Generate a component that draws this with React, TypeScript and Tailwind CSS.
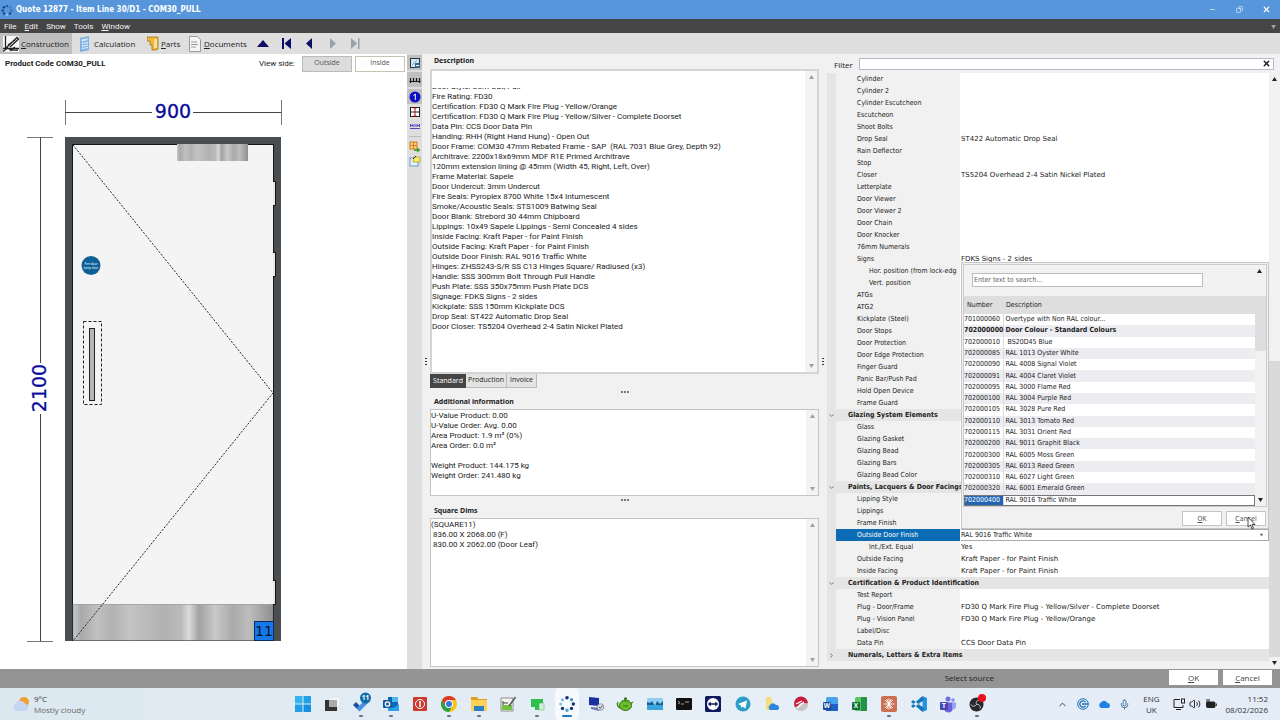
import React from "react"
import { ChevronUp, Mic, Minus, Copy, X, Volume2, ChevronDown, ChevronRight } from "lucide-react"

type Row = { label: string; value?: string; kind?: "group" | "closed" | "sub" | "selected" }

const properties: Row[] = [
	{ label: "Cylinder" },
	{ label: "Cylinder 2" },
	{ label: "Cylinder Escutcheon" },
	{ label: "Escutcheon" },
	{ label: "Shoot Bolts" },
	{ label: "Drop Seal", value: "ST422 Automatic Drop Seal" },
	{ label: "Rain Deflector" },
	{ label: "Stop" },
	{ label: "Closer", value: "TS5204 Overhead 2-4 Satin Nickel Plated" },
	{ label: "Letterplate" },
	{ label: "Door Viewer" },
	{ label: "Door Viewer 2" },
	{ label: "Door Chain" },
	{ label: "Door Knocker" },
	{ label: "76mm Numerals" },
	{ label: "Signs", value: "FDKS Signs - 2 sides" },
	{ label: "Hor. position (from lock-edg", kind: "sub" },
	{ label: "Vert. position", kind: "sub" },
	{ label: "ATGs" },
	{ label: "ATG2" },
	{ label: "Kickplate (Steel)" },
	{ label: "Door Stops" },
	{ label: "Door Protection" },
	{ label: "Door Edge Protection" },
	{ label: "Finger Guard" },
	{ label: "Panic Bar/Push Pad" },
	{ label: "Hold Open Device" },
	{ label: "Frame Guard" },
	{ label: "Glazing System Elements", kind: "group" },
	{ label: "Glass" },
	{ label: "Glazing Gasket" },
	{ label: "Glazing Bead" },
	{ label: "Glazing Bars" },
	{ label: "Glazing Bead Color" },
	{ label: "Paints, Lacquers & Door Facings", kind: "group" },
	{ label: "Lipping Style" },
	{ label: "Lippings" },
	{ label: "Frame Finish" },
	{ label: "Outside Door Finish", value: "RAL 9016 Traffic White", kind: "selected" },
	{ label: "Int./Ext. Equal", value: "Yes", kind: "sub" },
	{ label: "Outside Facing", value: "Kraft Paper - for Paint Finish" },
	{ label: "Inside Facing", value: "Kraft Paper - for Paint Finish" },
	{ label: "Certification & Product Identification", kind: "group" },
	{ label: "Test Report" },
	{ label: "Plug - Door/Frame", value: "FD30 Q Mark Fire Plug - Yellow/Silver - Complete Doorset" },
	{ label: "Plug - Vision Panel", value: "FD30 Q Mark Fire Plug - Yellow/Orange" },
	{ label: "Label/Disc" },
	{ label: "Data Pin", value: "CCS Door Data Pin" },
	{ label: "Numerals, Letters & Extra Items", kind: "closed" },
]

const colours: [string, string][] = [
	["701000060", "Overtype with Non RAL colour..."],
	["702000000", "Door Colour - Standard Colours"],
	["702000010", " BS20D45 Blue"],
	["702000085", "RAL 1013 Oyster White"],
	["702000090", "RAL 4008 Signal Violet"],
	["702000091", "RAL 4004 Claret Violet"],
	["702000095", "RAL 3000 Flame Red"],
	["702000100", "RAL 3004 Purple Red"],
	["702000105", "RAL 3028 Pure Red"],
	["702000110", "RAL 3013 Tomato Red"],
	["702000115", "RAL 3031 Orient Red"],
	["702000200", "RAL 9011 Graphit Black"],
	["702000300", "RAL 6005 Moss Green"],
	["702000305", "RAL 6013 Reed Green"],
	["702000310", "RAL 6027 Light Green"],
	["702000320", "RAL 6001 Emerald Green"],
	["702000400", "RAL 9016 Traffic White"],
]

const description = [
	"Fire Rating: FD30",
	"Certification: FD30 Q Mark Fire Plug - Yellow/Orange",
	"Certification: FD30 Q Mark Fire Plug - Yellow/Silver - Complete Doorset",
	"Data Pin: CCS Door Data Pin",
	"Handing: RHH (Right Hand Hung) - Open Out",
	"Door Frame: COM30 47mm Rebated Frame - SAP  (RAL 7031 Blue Grey, Depth 92)",
	"Architrave: 2200x18x69mm MDF R1E Primed Architrave",
	"120mm extension lining @ 45mm (Width 45, Right, Left, Over)",
	"Frame Material: Sapele",
	"Door Undercut: 3mm Undercut",
	"Fire Seals: Pyroplex 8700 White 15x4 Intumescent",
	"Smoke/Acoustic Seals: STS1009 Batwing Seal",
	"Door Blank: Strebord 30 44mm Chipboard",
	"Lippings: 10x49 Sapele Lippings - Semi Concealed 4 sides",
	"Inside Facing: Kraft Paper - for Paint Finish",
	"Outside Facing: Kraft Paper - for Paint Finish",
	"Outside Door Finish: RAL 9016 Traffic White",
	"Hinges: ZHSS243-S/R SS C13 Hinges Square/ Radiused (x3)",
	"Handle: SSS 300mm Bolt Through Pull Handle",
	"Push Plate: SSS 350x75mm Push Plate DCS",
	"Signage: FDKS Signs - 2 sides",
	"Kickplate: SSS 150mm Kickplate DCS",
	"Drop Seal: ST422 Automatic Drop Seal",
	"Door Closer: TS5204 Overhead 2-4 Satin Nickel Plated",
]

const Triangle: React.FC<{ down?: boolean; className?: string }> = ({ down, className }) => (
	<svg viewBox="0 0 5 4" className={`h-1 w-[5px] ${className ?? "text-gray-400"}`} fill="currentColor">
		<path d={down ? "M0 0h5L2.500 4z" : "M0 4h5L2.500 0z"} />
	</svg>
)

const ScrollStrip = () => (
	<div className="flex w-3 shrink-0 flex-col items-center justify-between bg-[#f3f3f3] py-1">
		<Triangle />
		<Triangle down />
	</div>
)

const Hot: React.FC<{ text: string }> = ({ text }) => (
	<>
		<span className="underline">{text[0]}</span>
		{text.slice(1)}
	</>
)

const TitleBar = () => (
	<header className="flex h-[19px] items-center bg-[#5796db] text-white">
		<svg viewBox="0 0 14 14" className="h-3.5 w-3.5">
			{[
				[7, 3, "#1c5fae"],
				[10, 4.3, "#3b7fca"],
				[11.3, 7.5, "#2a6ab8"],
				[10, 10.5, "#173f86"],
				[7, 11.8, "#8fc0f0"],
				[4, 10.5, "#173f86"],
				[2.7, 7.5, "#173f86"],
				[4, 4.3, "#173f86"],
			].map(([x, y, c]) => (
				<circle key={`${x}-${y}`} cx={x} cy={y} r="1.2" fill={c as string} />
			))}
		</svg>
		<h1 className="flex-1 pl-0.5 font-[DejaVu_Sans_Condensed,sans-serif] text-[8px] font-bold">Quote 12877 - Item Line 30/D1 - COM30_PULL</h1>
		<button aria-label="Minimise" className="flex w-[27px] justify-center">
			<Minus size={7} />
		</button>
		<button aria-label="Restore" className="flex w-[27px] justify-center">
			<Copy size={7} className="-scale-x-100" />
		</button>
		<button aria-label="Close" className="flex w-[27px] justify-center">
			<X size={9} strokeWidth={3} />
		</button>
	</header>
)

const MenuBar = () => (
	<nav className="flex h-3.5 items-center gap-2 bg-[#454545] px-1 pt-px font-[Roboto,sans-serif] text-[8px] text-gray-100">
		{["File", "Edit", "Show", "Tools", "Window"].map((item) => (
			<button key={item}>{item === "Edit" || item === "Window" ? <Hot text={item} /> : item}</button>
		))}
		<Triangle down className="ml-auto text-gray-400" />
	</nav>
)

const ToolBar = () => (
	<div className="flex h-[21px] items-stretch bg-[#dedede] text-[8px] text-[#222]">
		<button className="flex w-18 items-center gap-0.5 bg-[#bfbfbf] pl-[3px]">
			<svg viewBox="0 0 16 16" className="h-4 w-4">
				<rect width="16" height="16" fill="#f8f8f8" />
				<path d="M2.500 0v13M0 12.500h16M3 12L14 1.500l1.500 1.500L7 11M5 9l7-5" stroke="#222" fill="none" strokeWidth="1.300" />
				<path d="M0 15.500l5-4M7 15l5-4M6 13c3 2 5 1 9 1" stroke="#222" fill="none" strokeWidth="1.300" />
			</svg>
			<span>
				<Hot text="Construction" />
			</span>
		</button>
		<button className="flex w-[73px] items-center gap-1 pl-1.5">
			<svg viewBox="0 0 12 16" className="h-4 w-3">
				<path d="M2 2l9-2v14l-9 2z" fill="#7fb0e6" />
				<path d="M3.500 3.500l6-1.200v2l-6 1.200z" fill="#dceafc" />
				<path d="M4 7.500l6-1M4 10l6-1M4 12.500l6-1" stroke="#fff" strokeWidth="1.400" strokeDasharray="1.400 .8" />
			</svg>
			Calculation
		</button>
		<button className="flex w-[38px] items-center gap-0.5 pl-0.5">
			<svg viewBox="0 0 12 15" className="h-[15px] w-3">
				<path d="M0 1h11v12l-2 1H5V9H3V5H0z" fill="#f2b632" stroke="#9c7424" strokeWidth=".8" />
				<path d="M7 3h3v9H7z" fill="#fbe09a" />
			</svg>
			<span>
				<Hot text="Parts" />
			</span>
		</button>
		<button className="flex items-center gap-[3px] pl-1.5">
			<svg viewBox="0 0 12 16" className="h-4 w-3">
				<path d="M.5.5h8l3 3v12H.5z" fill="#f6f6f6" stroke="#999" />
				<path d="M2 6h6M2 8.500h7M2 11h5" stroke="#999" strokeWidth="1.200" />
			</svg>
			<span>
				<Hot text="Documents" />
			</span>
		</button>
		<div className="flex items-center gap-3 pl-2.5 text-[#0c0c66]">
			<button aria-label="Up">
				<svg viewBox="0 0 12 7" className="h-[7px] w-3" fill="currentColor">
					<path d="M6 0l6 7H0z" />
				</svg>
			</button>
			<button aria-label="First">
				<svg viewBox="0 0 11 11" className="h-[11px] w-[11px]" fill="currentColor">
					<path d="M1 0h2v11H1zM10 0v11L3.500 5.500z" />
				</svg>
			</button>
			<button aria-label="Previous">
				<svg viewBox="0 0 11 11" className="h-[11px] w-[11px]" fill="currentColor">
					<path d="M8 0v11L2 5.500z" />
				</svg>
			</button>
			<button aria-label="Next" className="text-gray-400">
				<svg viewBox="0 0 11 11" className="h-[11px] w-[11px]" fill="currentColor">
					<path d="M3 0v11l6-5.500z" />
				</svg>
			</button>
			<button aria-label="Last" className="text-gray-400">
				<svg viewBox="0 0 11 11" className="h-[11px] w-[11px]" fill="currentColor">
					<path d="M1 0v11l6-5.500zM8 0h1.500v11H8z" />
				</svg>
			</button>
		</div>
	</div>
)

const DoorDrawing = () => (
	<svg viewBox="0 72 407 597" className="min-h-0 w-full flex-1" preserveAspectRatio="xMinYMin meet">
		<defs>
			<linearGradient id="steel">
				<stop offset="0" stopColor="#c9c9c9" />
				<stop offset=".04" stopColor="#a9a9a9" />
				<stop offset=".12" stopColor="#c0c0c0" />
				<stop offset=".2" stopColor="#b2b2b2" />
				<stop offset=".28" stopColor="#c4c4c4" />
				<stop offset=".45" stopColor="#b2b2b2" />
				<stop offset=".54" stopColor="#bababa" />
				<stop offset=".58" stopColor="#dadada" />
				<stop offset=".63" stopColor="#a2a2a2" />
				<stop offset=".71" stopColor="#c9c9c9" />
				<stop offset=".8" stopColor="#a9a9a9" />
				<stop offset=".88" stopColor="#bdbdbd" />
				<stop offset="1" stopColor="#8f8f8f" />
			</linearGradient>
		</defs>
		<g stroke="#444" fill="none">
			<path d="M65.500 100v25M281.500 100v25M27 137.500h26M27 641.500h26" stroke="#777" />
			<path d="M65 112.500h87M193 112.500h88M40.500 137v226M40.500 414v227" />
		</g>
		<g fontFamily="DejaVu Sans, sans-serif" fontSize="19" fill="#0a0a9a" stroke="#0a0a9a" strokeWidth=".3" textAnchor="middle">
			<text x="173" y="118">
				900
			</text>
			<text transform="translate(46 388) rotate(-90)">2100</text>
		</g>
		<rect x="65" y="137" width="216" height="504" fill="#4a4e50" />
		<rect x="72.500" y="144.500" width="201" height="496" fill="#f4f4f4" stroke="#15151c" />
		<rect x="177" y="144" width="71" height="17" fill="url(#steel)" />
		<rect x="73" y="604.500" width="200" height="36" fill="url(#steel)" stroke="#777" strokeWidth=".5" />
		<g fill="#e8e8e8" stroke="#111">
			<path d="M273 181.500h2.500v24H273M273 252.500h2.500v24H273M273 580.500h2.500v24H273" />
		</g>
		<path d="M73 145L273 393L73 641" fill="none" stroke="#222" strokeDasharray="2 1.500" />
		<circle cx="91" cy="265.500" r="9.500" fill="#0e5f96" />
		<g fontFamily="Open Sans, sans-serif" fontSize="3" fontWeight="600" fill="#d8ecf8" textAnchor="middle">
			<text x="91" y="265">
				Fire door
			</text>
			<text x="91" y="269">
				keep shut
			</text>
		</g>
		<rect x="83.500" y="321.500" width="18" height="83" fill="none" stroke="#222" strokeDasharray="3 2" />
		<rect x="89.500" y="328.500" width="5" height="72" fill="#b5b5b5" stroke="#222" />
		<rect x="254.500" y="621.500" width="19" height="19" fill="#1478ea" stroke="#0a2a66" />
		<text x="264" y="636" fontFamily="DejaVu Sans, sans-serif" fontSize="14" textAnchor="middle" fill="#0a1430">
			11
		</text>
	</svg>
)

const DrawingPanel = () => (
	<section className="flex min-w-0 flex-col bg-white">
		<div className="flex h-[18px] items-center gap-[3px] pt-px pr-0.5 pl-[5px] font-[Roboto,sans-serif] text-[8px] text-[#222]">
			<h2 className="font-bold">Product Code COM30_PULL</h2>
			<span className="ml-auto pr-1">View side:</span>
			<button className="h-4 w-[50px] border border-[#bbb] bg-[#dcdcdc] font-['Open_Sans',sans-serif] text-[7px] text-[#555]">Outside</button>
			<button className="h-4 w-[50px] border border-[#c4c4b4] bg-white font-['Open_Sans',sans-serif] text-[7px] text-[#555]">Inside</button>
		</div>
		<DoorDrawing />
	</section>
)

const sideTools = [
	{
		label: "Glass view",
		on: true,
		art: (
			<>
				<rect x="1.500" y="1.500" width="9" height="9" fill="#cfe8f2" stroke="#234" />
				<path d="M3 8l5-5" stroke="#7ab" />
				<rect x="6" y="6" width="5" height="5" fill="#3d6486" />
				<path d="M7 8.500h3" stroke="#fff" />
			</>
		),
	},
	{
		label: "Dimensions",
		on: true,
		art: <path d="M1.500 4v5M.5 7.500h11M10.500 4v5M4.500 4v3M7.500 4v3" stroke="#112" fill="none" strokeWidth="1.200" />,
	},
	{
		label: "Numbers",
		on: true,
		art: (
			<>
				<circle cx="6" cy="6" r="5.500" fill="#0b10c4" />
				<path d="M4.500 4.500L6.300 3v6" stroke="#fff" fill="none" />
			</>
		),
	},
	{
		label: "Grid",
		art: (
			<>
				<rect x="1.500" y="1.500" width="9" height="9" fill="#fff" stroke="#222" />
				<path d="M1 6h10" stroke="#222" />
				<path d="M6 2v8M4.500 2h3M4.500 10h3" stroke="#b01820" />
			</>
		),
	},
	{ label: "Measure", art: <path d="M1 8.500h10M1.500 4v3M4 4v3M1.500 5.500H4M6 4v3M8 4v3M10.500 4v3M8 5.500h2" stroke="#5248b8" fill="none" /> },
	{
		label: "Export",
		divided: true,
		art: (
			<>
				<rect x="1" y="1" width="7" height="7" fill="#fbd27a" stroke="#d9791c" />
				<path d="M1 4.500h7M4.500 1v7" stroke="#d9791c" />
				<path d="M5 8.500h3V6.500l3.500 2.500L8 11.500V10H5z" fill="#3d9b2c" />
			</>
		),
	},
	{
		label: "Layers",
		art: (
			<>
				<rect x="1" y="3" width="8" height="8" fill="#e9f2fa" stroke="#6d9cc4" />
				<path d="M5 2h6v5H4z" fill="#f5ee62" stroke="#a39b2a" strokeWidth=".7" />
				<path d="M4 4l3-3" stroke="#333" />
			</>
		),
	},
]

const SideTools = () => (
	<div className="flex flex-col items-center gap-0.5 bg-[#dedede] pt-px">
		{sideTools.map((tool) => (
			<React.Fragment key={tool.label}>
				{tool.divided && <hr className="my-0.5 w-3 border-[#bbb]" />}
				<button aria-label={tool.label} className={`flex w-[15px] items-center justify-center ${tool.on ? "h-[15px] bg-[#c0c0c0]" : "h-3"}`}>
					<svg viewBox="0 0 12 12" className="h-3 w-3">
						{tool.art}
					</svg>
				</button>
			</React.Fragment>
		))}
	</div>
)

const Dots: React.FC<{ className: string }> = ({ className }) => (
	<div className={`flex items-center justify-center gap-px ${className}`}>
		<i className="h-0.5 w-0.5 bg-[#777]" />
		<i className="h-0.5 w-0.5 bg-[#777]" />
		<i className="h-0.5 w-0.5 bg-[#777]" />
	</div>
)

const SideDots = () => (
	<div className="flex w-2 shrink-0 flex-col items-center justify-center gap-0.5">
		<i className="h-px w-0.5 bg-[#333]" />
		<i className="h-px w-0.5 bg-[#333]" />
		<i className="h-px w-0.5 bg-[#333]" />
	</div>
)

const Caption: React.FC<{ children: React.ReactNode }> = ({ children }) => (
	<h2 className="pl-1 font-[Noto_Sans,sans-serif] text-[7px] leading-[14px] font-bold">{children}</h2>
)

const InfoPanel = () => (
	<section className="flex min-w-0 bg-[#f1f1f1] text-[#222]">
		<SideDots />
		<div className="flex min-w-0 flex-1 flex-col pb-0.5">
			<Caption>Description</Caption>
			<div className="mt-px flex h-[305px] border-2 border-[#d4d4d4] bg-white">
				<div className="min-w-0 flex-1 pt-[17px] font-[Roboto,sans-serif] leading-[10px] whitespace-pre">
					{/* scrolled half out of view */}
					<div className="flex h-1 items-end overflow-hidden">
						<p>Door Style: Com Out, Pull</p>
					</div>
					{description.map((line) => (
						<p key={line}>{line}</p>
					))}
				</div>
				<ScrollStrip />
			</div>
			<div className="flex h-3.5 text-[7px]">
				<button className="w-9 bg-[#454545] text-white">Standard</button>
				<button className="w-[41px] border-r border-b border-[#bbb] bg-[#e4e4e4]">Production</button>
				<button className="w-[30px] border-r border-b border-[#bbb] bg-[#e4e4e4]">Invoice</button>
			</div>
			<Dots className="h-[7px]" />
			<Caption>Additional information</Caption>
			<div className="flex h-[87px] border border-[#c4c4c4] bg-white">
				<div className="flex-1 pt-px font-[Roboto,sans-serif] leading-[10px]">
					<p>U-Value Product: 0.00</p>
					<p>U-Value Order: Avg. 0.00</p>
					<p>Area Product: 1.9 m² (0%)</p>
					<p>Area Order: 0.0 m²</p>
					<p className="pt-2.5">Weight Product: 144.175 kg</p>
					<p>Weight Order: 241.480 kg</p>
				</div>
				<ScrollStrip />
			</div>
			<Dots className="h-2" />
			<Caption>Square Dims</Caption>
			<div className="flex flex-1 border border-[#c4c4c4] bg-white">
				<div className="flex-1 pt-px font-[Roboto,sans-serif] leading-[10px] whitespace-pre">
					<p>(SQUARE11)</p>
					<p> 836.00 X 2068.00 (F)</p>
					<p> 830.00 X 2062.00 (Door Leaf)</p>
				</div>
				<ScrollStrip />
			</div>
		</div>
		<SideDots />
	</section>
)

const ColourPicker = () => (
	<div className="absolute right-0 bottom-full left-px z-10 border border-[#c6c6c6] bg-[#f1f1f1] p-px font-[DejaVu_Sans_Condensed,DejaVu_Sans,sans-serif] text-[#222]">
		<div className="border border-[#ccc]">
			<div className="flex h-[31px] items-start justify-between bg-[#f2f2f2] pt-1 pr-1 pl-2">
				<input
					aria-label="Search colours"
					placeholder="Enter text to search..."
					className="mt-1 h-3.5 w-[231px] border border-[#bbb] bg-white px-px placeholder:text-[#666]"
				/>
				<Triangle className="text-[#222]" />
			</div>
			<div className="flex">
				<table className="h-[210px] flex-1 table-fixed border-collapse text-left">
					<thead>
						<tr className="h-[18px] bg-[#dedede]">
							<th className="w-[39px] pl-[3px] font-normal">Number</th>
							<th className="pl-0.5 font-normal">Description</th>
						</tr>
					</thead>
					<tbody>
						{colours.map(([code, name], i) => {
							const selected = code === "702000400"
							return (
								<tr
									key={code}
									className={`${i % 2 ? "bg-[#ececf1]" : "bg-white"} ${i === 1 ? "font-bold" : ""} ${selected ? "outline outline-[#777] -outline-offset-1" : ""}`}
								>
									<td className={`border-r border-[#ddd] leading-[11px] ${selected ? "bg-[#2264b4] text-white" : ""}`}>{code}</td>
									<td className="pl-px leading-[11px] whitespace-pre">{name}</td>
								</tr>
							)
						})}
					</tbody>
				</table>
				<div className="flex w-[11px] flex-col items-center justify-between bg-[#f1f1f1] pb-1">
					<div className="h-[55px] w-full bg-[#dedede]" />
					<Triangle down className="text-[#222]" />
				</div>
			</div>
		</div>
		<div className="flex justify-end gap-1 px-px pt-1 pb-px">
			<button className="h-[15px] w-10 border border-[#c4c4c4] bg-white text-[#555]">
				<Hot text="OK" />
			</button>
			<button className="relative h-[15px] w-10 border border-[#c4c4c4] bg-white text-[#555]">
				<Hot text="Cancel" />
				<svg viewBox="0 0 9 14" className="absolute top-1 left-5 h-3.5 w-[9px]">
					<path d="M1 1v10l2.500-2L5 13l1.500-.8L5 8.500h3z" fill="#fff" stroke="#222" strokeWidth=".8" />
				</svg>
			</button>
		</div>
	</div>
)

const PropertyRow: React.FC<{ row: Row }> = ({ row }) => {
	if (row.kind === "group" || row.kind === "closed") {
		return (
			<tr className="h-3 bg-[#e5e5e5]">
				<td className="p-0">
					{row.kind === "group" ? (
						<ChevronDown size={7} strokeWidth={3} className="mx-auto text-[#3a72b0]" />
					) : (
						<ChevronRight size={7} strokeWidth={3} className="mx-auto text-[#3a72b0]" />
					)}
				</td>
				<th colSpan={2} className="p-0 pl-3 text-left leading-3 font-bold whitespace-nowrap">
					{row.label}
				</th>
			</tr>
		)
	}
	const selected = row.kind === "selected"
	return (
		<tr className="h-3">
			<td className="bg-[#e5e5e5] p-0" />
			<th
				className={`overflow-hidden p-0 text-left leading-3 font-normal whitespace-nowrap ${row.kind === "sub" ? "pl-[33px]" : "pl-[21px]"} ${selected ? "bg-[#0b6cb4] text-white" : "bg-[#f1f1f1]"}`}
			>
				{row.label}
			</th>
			<td className={`relative bg-white p-0 pl-px leading-3 ${selected ? "" : "font-[DejaVu_Sans,sans-serif]"}`}>
				{selected ? (
					<>
						<ColourPicker />
						<div className="flex h-3 items-center border-y border-r border-[#aaa] pr-1">
							<select aria-label={row.label} className="h-2.5 flex-1 appearance-none leading-[10px]">
								<option>{row.value}</option>
							</select>
							<Triangle down className="scale-75 text-[#666]" />
						</div>
					</>
				) : (
					row.value
				)}
			</td>
		</tr>
	)
}

const PropertyPanel = () => (
	<section className="flex min-w-0 flex-col bg-[#f1f1f1] font-[DejaVu_Sans_Condensed,DejaVu_Sans,sans-serif] text-[7px] text-[#222]">
		<div className="flex h-[19px] items-center gap-1.5 pr-1.5 pl-[7px]">
			<label htmlFor="filter" className="pt-0.5 font-['Open_Sans',sans-serif] text-[8px]">
				Filter
			</label>
			<div className="flex h-3 flex-1 items-center border border-[#b8b8c8] bg-white pr-0.5">
				<input id="filter" className="h-2.5 min-w-0 flex-1 bg-transparent" />
				<button aria-label="Clear filter">
					<X size={9} strokeWidth={4} />
				</button>
			</div>
		</div>
		<div className="flex flex-1">
			<div className="min-w-0 flex-1">
				<table className="w-full table-fixed border-collapse">
					<colgroup>
						<col className="w-[9px]" />
						<col className="w-[124px]" />
						<col />
					</colgroup>
					<tbody>
						{properties.map((row) => (
							<PropertyRow key={row.label} row={row} />
						))}
					</tbody>
				</table>
			</div>
			<div className="flex w-[11px] flex-col items-center justify-between bg-[#f1f1f1] py-1">
				<Triangle className="text-[#222]" />
				<div className="mt-auto mb-1 h-[296px] w-full bg-[#dadada]" />
				<Triangle down className="text-[#222]" />
			</div>
		</div>
	</section>
)

const Badge: React.FC<{ letter: string; fill: string }> = ({ letter, fill }) => (
	<>
		<rect y="6" width="8" height="8" rx="1" fill={fill} />
		<text x="4" y="12.300" fontSize="6.500" fontWeight="700" fill="#fff" textAnchor="middle" fontFamily="Open Sans, sans-serif">
			{letter}
		</text>
	</>
)

const apps: { name: string; running?: boolean; active?: boolean; art: React.ReactNode }[] = [
	{
		name: "Start",
		art: (
			<g fill="#1690dc">
				<path d="M0 0h7.500v7.500H0z" fill="#35b4ee" />
				<path d="M8.500 0H16v7.500H8.500zM0 8.500h7.500V16H0z" fill="#22a0e4" />
				<path d="M8.500 8.500H16V16H8.500z" />
			</g>
		),
	},
	{
		name: "Task view",
		art: (
			<>
				<rect x="5" y="1" width="11" height="10" rx="1" fill="#f4f4f4" stroke="#ddd" strokeWidth=".5" />
				<path d="M1 4h4v7h8v4H1z" fill="#333" />
				<path d="M5 4h8v7H5z" fill="#aaa" />
			</>
		),
	},
	{
		name: "To Do",
		running: true,
		art: (
			<>
				<path d="M0 9l3-3 4 4-3 3z" fill="#1e4f9e" />
				<path d="M3.500 12.500L12 4l3 3-8.500 8.500z" fill="#4a8fe0" />
				<circle cx="12.500" cy="2" r="5.500" fill="#0f6cab" />
				<text x="12.500" y="4.300" fontSize="6.500" fontWeight="700" fill="#fff" textAnchor="middle" fontFamily="Open Sans, sans-serif">
					11
				</text>
			</>
		),
	},
	{
		name: "Outlook",
		running: true,
		art: (
			<>
				<path d="M5 1h10v13H5z" fill="#1066b5" />
				<path d="M9 1h6v5H9z" fill="#4bb8f0" />
				<path d="M5 9l5.500 3L16 8v7H5z" fill="#2d9fe6" />
				<rect y="4" width="9" height="8" rx="1" fill="#0f5ba8" />
				<circle cx="4.500" cy="8" r="2.200" fill="none" stroke="#fff" strokeWidth="1.300" />
			</>
		),
	},
	{
		name: "Power tool",
		art: (
			<>
				<rect x="1" y="1" width="14" height="14" rx="1" fill="#c83a2c" />
				<circle cx="8" cy="8" r="4.500" fill="none" stroke="#fff" />
				<path d="M8 5v6" stroke="#fff" strokeWidth="1.500" />
			</>
		),
	},
	{
		name: "Chrome",
		running: true,
		art: (
			<>
				<circle cx="8" cy="8" r="8" fill="#f9c513" />
				<path d="M1.070 4A8 8 0 0 1 14.930 4L8 4L4.500 10z" fill="#dd3a2c" />
				<path d="M1.070 4A8 8 0 0 0 8 16L11.500 10L4.500 10z" fill="#2c9f4b" />
				<circle cx="8" cy="8" r="4" fill="#fff" />
				<circle cx="8" cy="8" r="3" fill="#3574e2" />
			</>
		),
	},
	{
		name: "Explorer",
		running: true,
		art: (
			<>
				<path d="M0 1h6l1.500 2H16v4H0z" fill="#e0a21c" />
				<path d="M0 4h16v11H0z" fill="#fbd15a" />
				<path d="M3 10h10v5H3z" fill="#2b7fc4" />
			</>
		),
	},
	{
		name: "Notepad++",
		art: (
			<>
				<path d="M1 2h12v13H1z" fill="#f4f6ee" stroke="#777" strokeWidth=".8" />
				<path d="M2 9h10v5H2z" fill="#76c043" />
				<path d="M3 5v4M3 7h5" stroke="#444" />
				<path d="M15.500 1L9 10" stroke="#555" strokeWidth="1.500" />
			</>
		),
	},
	{
		name: "Remote support",
		running: true,
		art: (
			<>
				<path d="M2 3h12v8H2zM6 11h4v3H6z" fill="#2ec14c" />
				<rect x="10" y="7" width="5" height="7" rx="1" fill="#d6efd9" stroke="#4a4" strokeWidth=".5" />
			</>
		),
	},
	{
		name: "Quote",
		active: true,
		art: (
			<g fill="#1a2f6c">
				<circle cx="8" cy="1.800" r="1.800" />
				<circle cx="12.500" cy="3.700" r="1.600" fill="#3c8fd0" />
				<circle cx="14.300" cy="8" r="1.700" />
				<circle cx="12.500" cy="12.400" r="1.700" />
				<circle cx="8" cy="14.200" r="1.700" fill="#4fa8c8" />
				<circle cx="3.500" cy="12.400" r="1.700" />
				<circle cx="1.700" cy="8" r="1.600" fill="#7fc4dc" />
				<circle cx="3.500" cy="3.700" r="1.500" fill="#7fb4dc" />
			</g>
		),
	},
	{
		name: "Remote desktop",
		art: (
			<>
				<path d="M1 1l10 1v8L1 9z" fill="#1c2f9e" />
				<path d="M3 11l9 1-1 3-8-2z" fill="#6a78a8" />
				<circle cx="12.500" cy="11" r="3.300" fill="#d8dde2" stroke="#667" strokeWidth=".6" />
				<path d="M11 11l1.300 1.300 2-2.600" stroke="#456" fill="none" />
			</>
		),
	},
	{
		name: "Teapot",
		art: (
			<>
				<path d="M1 6c-2 3 1 6 3 6M13 8l3-2" stroke="#3f8e1a" strokeWidth="1.500" fill="none" />
				<ellipse cx="8.500" cy="9.500" rx="6" ry="5" fill="#6cbf2a" stroke="#2f6e14" />
				<path d="M5 4h7l1 2H4z" fill="#4b9c20" />
				<circle cx="8.500" cy="2.700" r="1.500" fill="#2f6e14" />
				<path d="M6 10h5" stroke="#2f6e14" />
			</>
		),
	},
	{
		name: "Monitor",
		art: (
			<>
				<rect y="2" width="16" height="12" rx="1" fill="#8fd0f2" />
				<path d="M0 6l3 1 2-2 3 5 2-5 3 3 3-3v4H0z" fill="#155f96" />
				<path d="M0 9h16v5H0z" fill="#3aa4dc" />
			</>
		),
	},
	{
		name: "Terminal",
		art: (
			<>
				<rect y="2" width="16" height="12" rx="1" fill="#111" />
				<path d="M2 5l2 1.500L2 8M5 8h3M9 6h4" stroke="#ccc" fill="none" strokeWidth=".8" />
			</>
		),
	},
	{
		name: "TeamViewer",
		art: (
			<>
				<rect width="16" height="16" rx="1.500" fill="#0e1a5c" />
				<circle cx="8" cy="8" r="6" fill="#fff" />
				<path d="M2.800 8l3-2.500v1.700h4.400V5.500l3 2.500-3 2.500V8.800H5.800v1.700z" fill="#0e1a5c" />
			</>
		),
	},
	{
		name: "Telegram",
		art: (
			<>
				<circle cx="8" cy="8" r="7.500" fill="#2d9cc8" />
				<path d="M3 8l9-3.500-1.500 8-3-2-1.500 1.500V9.500z" fill="#fff" />
			</>
		),
	},
	{
		name: "Cloud folder",
		art: (
			<>
				<path d="M2 1h5l1 2v11H2z" fill="#f6dc80" />
				<path d="M6 14a3 3 0 0 1 0-5 3.500 3.500 0 0 1 6 0 2.500 2.500 0 0 1 1 5z" fill="#2b86dc" />
			</>
		),
	},
	{
		name: "Sketch",
		art: (
			<>
				<circle cx="8" cy="8" r="7" fill="#c8c4c4" />
				<path d="M1 8a7 7 0 0 1 14-1c-4 1-8-2-10 3L2 11z" fill="#c81c3c" />
				<path d="M4 12l7-6M3 8l6-3" stroke="#fff" strokeWidth="1.300" />
			</>
		),
	},
	{
		name: "Word",
		art: (
			<>
				<rect x="3" y="1" width="12" height="14" rx="1.500" fill="#4aa2ec" />
				<path d="M3 8h12v6a1 1 0 0 1-1 1H3z" fill="#1d5fc4" />
				<Badge letter="W" fill="#174a9c" />
			</>
		),
	},
	{
		name: "Excel",
		art: (
			<>
				<rect x="3" y="1" width="12" height="14" rx="1.500" fill="#5cc45c" />
				<path d="M9 1h5a1 1 0 0 1 1 1v12a1 1 0 0 1-1 1H9z" fill="#23934c" />
				<Badge letter="X" fill="#14703a" />
			</>
		),
	},
	{
		name: "Claude",
		running: true,
		art: (
			<>
				<rect width="16" height="16" rx="2" fill="#cc6f52" />
				<path d="M8 2.500v11M2.500 8h11M4 4l8 8M12 4l-8 8M5.800 3l4.400 10M10.200 3L5.800 13" stroke="#fff" strokeWidth=".9" />
			</>
		),
	},
	{
		name: "VS Code",
		art: (
			<>
				<path d="M11.500 0L16 2v12l-4.500 2z" fill="#2496e0" />
				<path d="M11.500 0L0 10l2 2L13 4zM11.500 16L0 6l2-2 11 8z" fill="#1678bc" />
			</>
		),
	},
	{
		name: "Teams",
		art: (
			<>
				<circle cx="8" cy="3" r="2.500" fill="#6c72e0" />
				<circle cx="13" cy="4" r="1.800" fill="#8b90f0" />
				<path d="M4 6.500h9V12a4.500 4.500 0 0 1-9 0z" fill="#6a62d8" />
				<path d="M12 6.500h4V11a3 3 0 0 1-4 2z" fill="#9aa0f4" />
				<Badge letter="T" fill="#4a46b4" />
			</>
		),
	},
	{
		name: "OBS",
		running: true,
		art: (
			<>
				<circle cx="7.500" cy="8.500" r="7" fill="#26262c" />
				<path d="M7.500 8.500c-1-3 1-5 3-4M7.500 8.500c3-.5 4.500 2 3.500 4M7.500 8.500c-2 2.500-5 2-5.500 0" stroke="#ccc" fill="none" />
				<circle cx="13" cy="2" r="4" fill="#e8101c" />
			</>
		),
	},
]

const TaskBar = () => (
	<footer className="grid h-8 grid-cols-[1fr_699px_1fr] items-center bg-linear-to-r from-[#dce8f0] via-[#e6eef6] to-[#e4ecf8] text-[8px] text-[#333]">
		<div className="flex items-center gap-1 pl-3">
			<svg viewBox="0 0 18 16" className="h-4 w-[18px]">
				<circle cx="12" cy="6" r="5" fill="#f0a02c" />
				<path d="M4 15a4 4 0 0 1 0-7.500 5 5 0 0 1 9 0A4 4 0 0 1 14 15z" fill="#c4d6f4" />
			</svg>
			<div className="leading-[11px]">
				<p>9°C</p>
				<p className="text-[#666]">Mostly cloudy</p>
			</div>
		</div>
		<div className="flex h-full justify-between">
			{apps.map((app) => (
				<button
					key={app.name}
					aria-label={app.name}
					className={`flex w-6 flex-col items-center pt-2 ${app.active ? "rounded bg-white/70" : ""}`}
				>
					<svg viewBox="0 0 16 16" className="h-4 w-4 shrink-0 overflow-visible">
						{app.art}
					</svg>
					{app.running && <i className="mt-[3px] h-0.5 w-1 rounded bg-gray-500" />}
					{app.active && <i className="mt-[3px] h-0.5 w-2.5 rounded bg-[#1a78b8]" />}
				</button>
			))}
		</div>
		<div className="flex items-center justify-end gap-[9px] pr-3">
			<ChevronUp size={11} />
			<svg viewBox="0 0 12 12" className="h-3 w-3" fill="none" stroke="#1b74b0">
				<circle cx="6" cy="6" r="5.300" />
				<path d="M8.500 4a3.200 3.200 0 1 0 0 4M5 6h6" strokeWidth="1.300" />
			</svg>
			<svg viewBox="0 0 12 10" className="h-2.5 w-3">
				<path d="M3 9a3 3 0 0 1 0-5.500 3.500 3.500 0 0 1 6.300.5A2.500 2.500 0 0 1 9.500 9z" fill="#1f84e0" />
			</svg>
			<Mic size={11} className="text-[#3a6a90]" />
			<p className="px-1 text-center leading-[11px]">
				ENG
				<br />
				UK
			</p>
			<div className="flex items-center gap-1">
				<svg viewBox="0 0 12 12" className="h-3 w-3" fill="none" stroke="#222">
					<path d="M7 1.500H1v8h9V7M3 11.500h5" />
					<rect x="8.500" y="1" width="3" height="4" />
				</svg>
				<Volume2 size={12} />
				<svg viewBox="0 0 12 10" className="h-2.5 w-3">
					<rect x="1.500" y="3" width="8.500" height="5.500" rx="1" fill="#222" stroke="#222" />
					<path d="M11.300 4.500v2.500" stroke="#222" />
					<path d="M2 0v3M4 0v3" stroke="#222" />
				</svg>
			</div>
			<p className="text-right leading-[11px]">
				11:52
				<br />
				08/02/2026
			</p>
		</div>
	</footer>
)

export default function App() {
	return (
		<div className="flex min-h-screen flex-col bg-white font-['Open_Sans',sans-serif] text-[8px]">
			<TitleBar />
			<MenuBar />
			<ToolBar />
			<main className="grid flex-1 grid-cols-[407fr_15px_405fr_453fr]">
				<DrawingPanel />
				<SideTools />
				<InfoPanel />
				<PropertyPanel />
			</main>
			<div className="flex h-[19px] items-start justify-end gap-[5px] bg-[#949494] pt-px pr-2 text-[#222]">
				<span className="mr-[170px] leading-4">Select source</span>
				<button className="h-[15px] w-[49px] bg-white text-[#444]">
					<Hot text="OK" />
				</button>
				<button className="h-[15px] w-[49px] bg-white text-[#444]">
					<Hot text="Cancel" />
				</button>
			</div>
			<TaskBar />
		</div>
	)
}
